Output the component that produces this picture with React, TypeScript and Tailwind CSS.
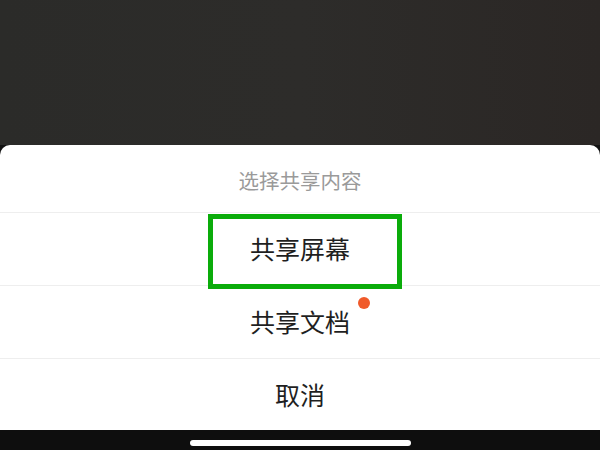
const items = ['共享屏幕', '共享文档', '取消']

const Divider: React.FC = () => <div className="h-px bg-[#eeeeee]" />

export default function App() {
  return (
    <div className="flex h-[450px] w-[600px] flex-col overflow-hidden bg-[#121212] font-['Noto_Sans_CJK_SC',sans-serif]">
      {/* dimmed meeting view behind the sheet */}
      <div className="h-[145px] shrink-0 bg-gradient-to-r from-[#2b2b29] via-[#2d2c2a] to-[#2b2725]" />

      {/* share picker sheet */}
      <div className="flex flex-col rounded-t-[10px] bg-white">
        <div className="flex h-[67px] items-center justify-center pt-[4px] text-[20.5px] text-[#9a9a9a]">
          选择共享内容
        </div>
        <Divider />
        <div className="relative flex h-[72px] items-center justify-center text-[25px] text-[#1f1f1f]">
          {items[0]}
          <div className="absolute left-[208px] top-[1px] h-[75px] w-[194px] border-[5px] border-[#0aac0a]" />
        </div>
        <Divider />
        <div className="relative flex h-[72px] items-center justify-center text-[25px] text-[#1f1f1f]">
          {items[1]}
          <span className="absolute left-[358px] top-[11px] h-[12px] w-[12px] rounded-full bg-[#f05a2a]" />
        </div>
        <Divider />
        <div className="flex h-[71px] items-center justify-center text-[25px] text-[#1f1f1f]">
          {items[2]}
        </div>
      </div>

      {/* home indicator strip */}
      <div className="flex h-[20px] shrink-0 justify-center bg-[#0e0e0e] pt-[10px]">
        <div className="h-[6px] w-[221px] rounded-full bg-white" />
      </div>
    </div>
  )
}
